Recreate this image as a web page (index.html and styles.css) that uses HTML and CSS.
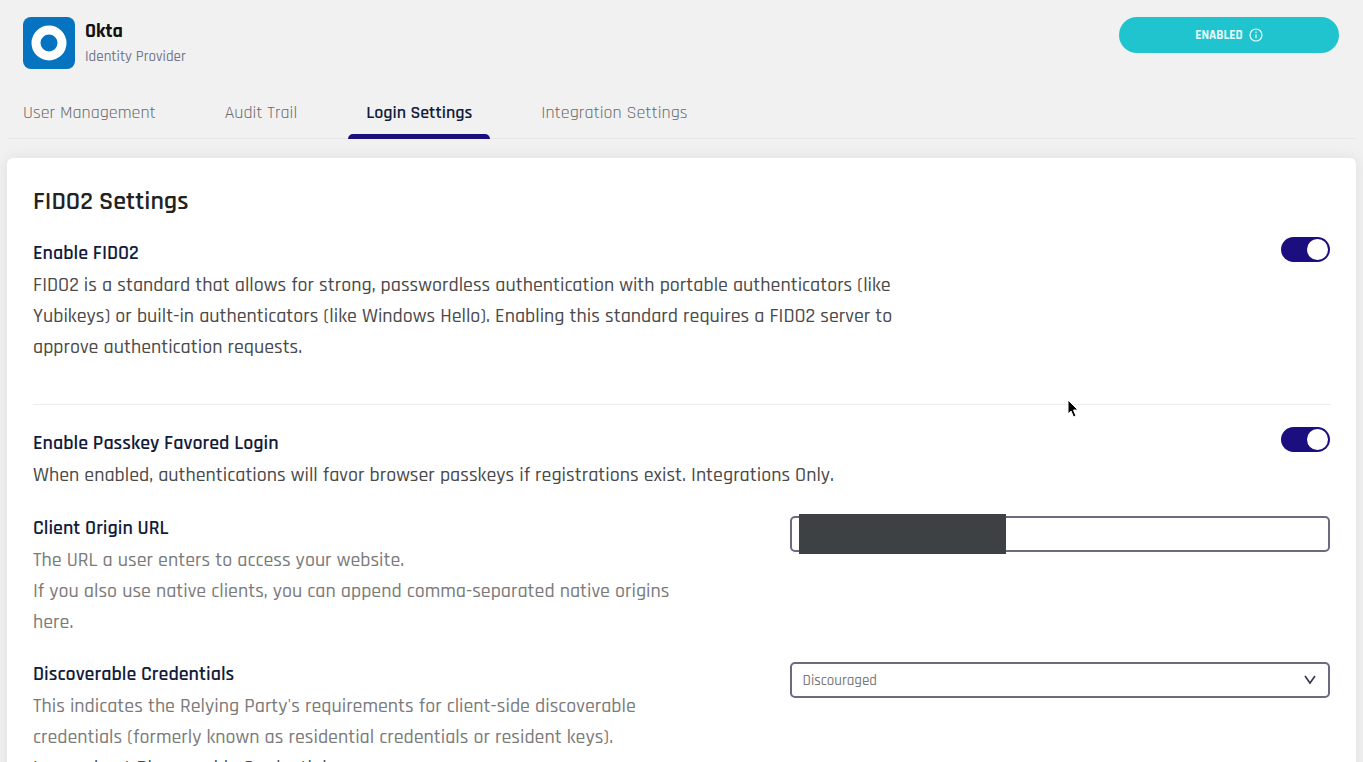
FILE: index.html
```
<!DOCTYPE html>
<html lang="en">
<head>
    <meta charset="UTF-8">
    <meta name="viewport" content="width=device-width, initial-scale=1.0">
    <title>Okta - Login Settings</title>
    <link rel="stylesheet" href="styles.css">
</head>
<body>
    <header class="page-header">
        <div class="provider">
            <svg class="provider-logo" viewBox="0 0 52 52" aria-hidden="true">
                <rect width="52" height="52" rx="8" fill="#0573bf"/>
                <circle cx="26" cy="26" r="13" fill="none" stroke="#fff" stroke-width="9"/>
            </svg>
            <div>
                <h1 class="provider-name">Okta</h1>
                <p class="provider-type">Identity Provider</p>
            </div>
        </div>
        <button type="button" class="btn-enabled">
            ENABLED
            <svg class="info-icon" viewBox="0 0 14 14" aria-hidden="true">
                <circle cx="7" cy="7" r="6" fill="none" stroke="currentColor" stroke-width="1.2"/>
                <path d="M7 6.2v4" stroke="currentColor" stroke-width="1.2"/>
                <circle cx="7" cy="4.2" r="0.8" fill="currentColor"/>
            </svg>
        </button>
    </header>

    <nav class="tabs">
        <a href="#" class="tab">User Management</a>
        <a href="#" class="tab">Audit Trail</a>
        <a href="#" class="tab active">Login Settings</a>
        <a href="#" class="tab">Integration Settings</a>
    </nav>

    <main class="card">
        <h2 class="card-title">FIDO2 Settings</h2>

        <div class="setting">
            <div class="setting-wide">
                <label class="setting-label" for="enable-fido2">Enable FIDO2</label>
                <p class="setting-text">FIDO2 is a standard that allows for strong, passwordless authentication with portable authenticators (like Yubikeys) or built-in authenticators (like Windows Hello). Enabling this standard requires a FIDO2 server to approve authentication requests.</p>
            </div>
            <input type="checkbox" class="toggle" id="enable-fido2" checked>
        </div>

        <hr class="divider">

        <div class="setting">
            <div class="setting-wide">
                <label class="setting-label" for="enable-passkey">Enable Passkey Favored Login</label>
                <p class="setting-text">When enabled, authentications will favor browser passkeys if registrations exist. Integrations Only.</p>
            </div>
            <input type="checkbox" class="toggle" id="enable-passkey" checked>
        </div>

        <div class="field">
            <div class="field-info">
                <label class="setting-label" for="origin-url">Client Origin URL</label>
                <p class="field-text">The URL a user enters to access your website.<br>If you also use native clients, you can append comma-separated native origins here.</p>
            </div>
            <div class="field-control">
                <input type="text" class="form-input" id="origin-url">
                <span class="redacted"></span>
            </div>
        </div>

        <div class="field">
            <div class="field-info">
                <label class="setting-label" for="discoverable">Discoverable Credentials</label>
                <p class="field-text">This indicates the Relying Party's requirements for client-side discoverable credentials (formerly known as residential credentials or resident keys).</p>
                <a href="#" class="learn-link">Learn about Discoverable Credentials</a>
            </div>
            <div class="field-control">
                <select class="form-input form-select" id="discoverable">
                    <option>Discouraged</option>
                    <option>Preferred</option>
                    <option>Required</option>
                </select>
                <svg class="chevron" viewBox="0 0 12 10" aria-hidden="true">
                    <path d="M1 1l5 7 5-7" fill="none" stroke="currentColor" stroke-width="1.6"/>
                </svg>
            </div>
        </div>
    </main>

    <svg class="cursor" viewBox="0 0 12 19" aria-hidden="true">
        <path d="M1 1v14l3-3 2.500 6 2.500-1-2.500-6h4.500z" fill="#000" stroke="#fff" stroke-width="1"/>
    </svg>
</body>
</html>
```
FILE: styles.css
```
:root {
    --primary-color: #1b0f80;
    --teal: #1fc4cf;
    --navy: #141c3d;
    --text-color: #4a4a4a;
    --muted: #7b7b7b;
    --border-color: #6a6b7d;
    --bg-color: #f1f1f1;
}

* {
    margin: 0;
    padding: 0;
    box-sizing: border-box;
    font-family: Rajdhani, Roboto, "Liberation Sans", sans-serif;
}

body {
    background: var(--bg-color);
    height: 100vh;
    overflow: hidden;
    padding: 0 7px;
}

.page-header {
    display: flex;
    justify-content: space-between;
    align-items: flex-start;
    padding: 17px 17px 0 16px;
}

.provider {
    display: flex;
    gap: 10px;
}

.provider-logo {
    width: 52px;
    height: 52px;
}

.provider-name {
    font-size: 20px;
    line-height: 28px;
    font-weight: 700;
    color: #111111;
}

.provider-type {
    font-size: 15px;
    line-height: 24px;
    font-weight: 500;
    color: #77788c;
}

.btn-enabled {
    display: flex;
    align-items: center;
    justify-content: center;
    gap: 6px;
    width: 220px;
    height: 36px;
    border: none;
    border-radius: 18px;
    background: var(--teal);
    color: #e8fbfc;
    font-size: 13px;
    font-weight: 700;
    cursor: pointer;
}

.info-icon {
    width: 14px;
    height: 14px;
}

.tabs {
    display: flex;
    gap: 33px;
    margin-top: 18px;
    border-bottom: 1px solid #e6e6e6;
}

.tab {
    position: relative;
    padding: 0 18px;
    font-size: 18px;
    line-height: 51px;
    color: #6c6c6c;
    text-decoration: none;
}

.tab:first-child {
    padding-left: 16px;
}

.tab.active {
    color: var(--navy);
    font-weight: 600;
}

.tab.active::after {
    content: '';
    position: absolute;
    left: 0;
    right: 0;
    bottom: -1px;
    height: 5px;
    border-radius: 5px 5px 0 0;
    background: var(--primary-color);
}

.card {
    margin-top: 19px;
    padding: 26px;
    background: #ffffff;
    border-radius: 6px;
    box-shadow: 0 0 16px rgba(0, 0, 0, 0.08);
}

.card-title {
    margin-bottom: 17px;
    font-size: 26px;
    line-height: 36px;
    font-weight: 600;
    color: #222222;
}

.setting {
    display: flex;
    justify-content: space-between;
    align-items: flex-start;
}

.setting-wide {
    max-width: 890px;
}

.setting-label {
    display: block;
    font-size: 20px;
    line-height: 33px;
    font-weight: 600;
    color: var(--navy);
}

.setting-text,
.field-text {
    font-size: 20px;
    line-height: 31px;
    font-weight: 500;
    color: var(--text-color);
}

.field-text {
    color: var(--muted);
}

.toggle {
    appearance: none;
    display: flex;
    justify-content: flex-end;
    width: 49px;
    height: 25px;
    padding: 2px;
    border-radius: 13px;
    background: var(--primary-color);
    cursor: pointer;
}

.toggle::before {
    content: '';
    width: 21px;
    height: 21px;
    border-radius: 50%;
    background: #ffffff;
}

.toggle:not(:checked) {
    justify-content: flex-start;
    background: #b5b5c0;
}

.divider {
    margin: 41px 0 22px;
    border: none;
    border-top: 1px solid #ececec;
}

.field {
    display: grid;
    grid-template-columns: 7fr 5fr;
    margin-top: 21px;
}

.field + .field {
    margin-top: 20px;
}

.field-info {
    max-width: 670px;
}

.field-control {
    position: relative;
    padding-top: 4px;
}

.form-input {
    display: block;
    width: 100%;
    height: 36px;
    padding: 0 11px;
    border: 2px solid var(--border-color);
    border-radius: 5px;
    background: #ffffff;
    font-size: 15px;
    font-weight: 500;
    color: var(--muted);
}

.form-select {
    appearance: none;
}

.redacted {
    position: absolute;
    top: 2px;
    left: 9px;
    width: 207px;
    height: 40px;
    background: #3d4144;
}

.chevron {
    position: absolute;
    top: 17px;
    right: 14px;
    width: 12px;
    height: 10px;
    color: #33364d;
    pointer-events: none;
}

.learn-link {
    font-size: 20px;
    line-height: 31px;
    font-weight: 500;
    color: var(--text-color);
    text-decoration: none;
}

.cursor {
    position: absolute;
    top: 399px;
    left: 1067px;
    width: 12px;
    height: 19px;
}
```
